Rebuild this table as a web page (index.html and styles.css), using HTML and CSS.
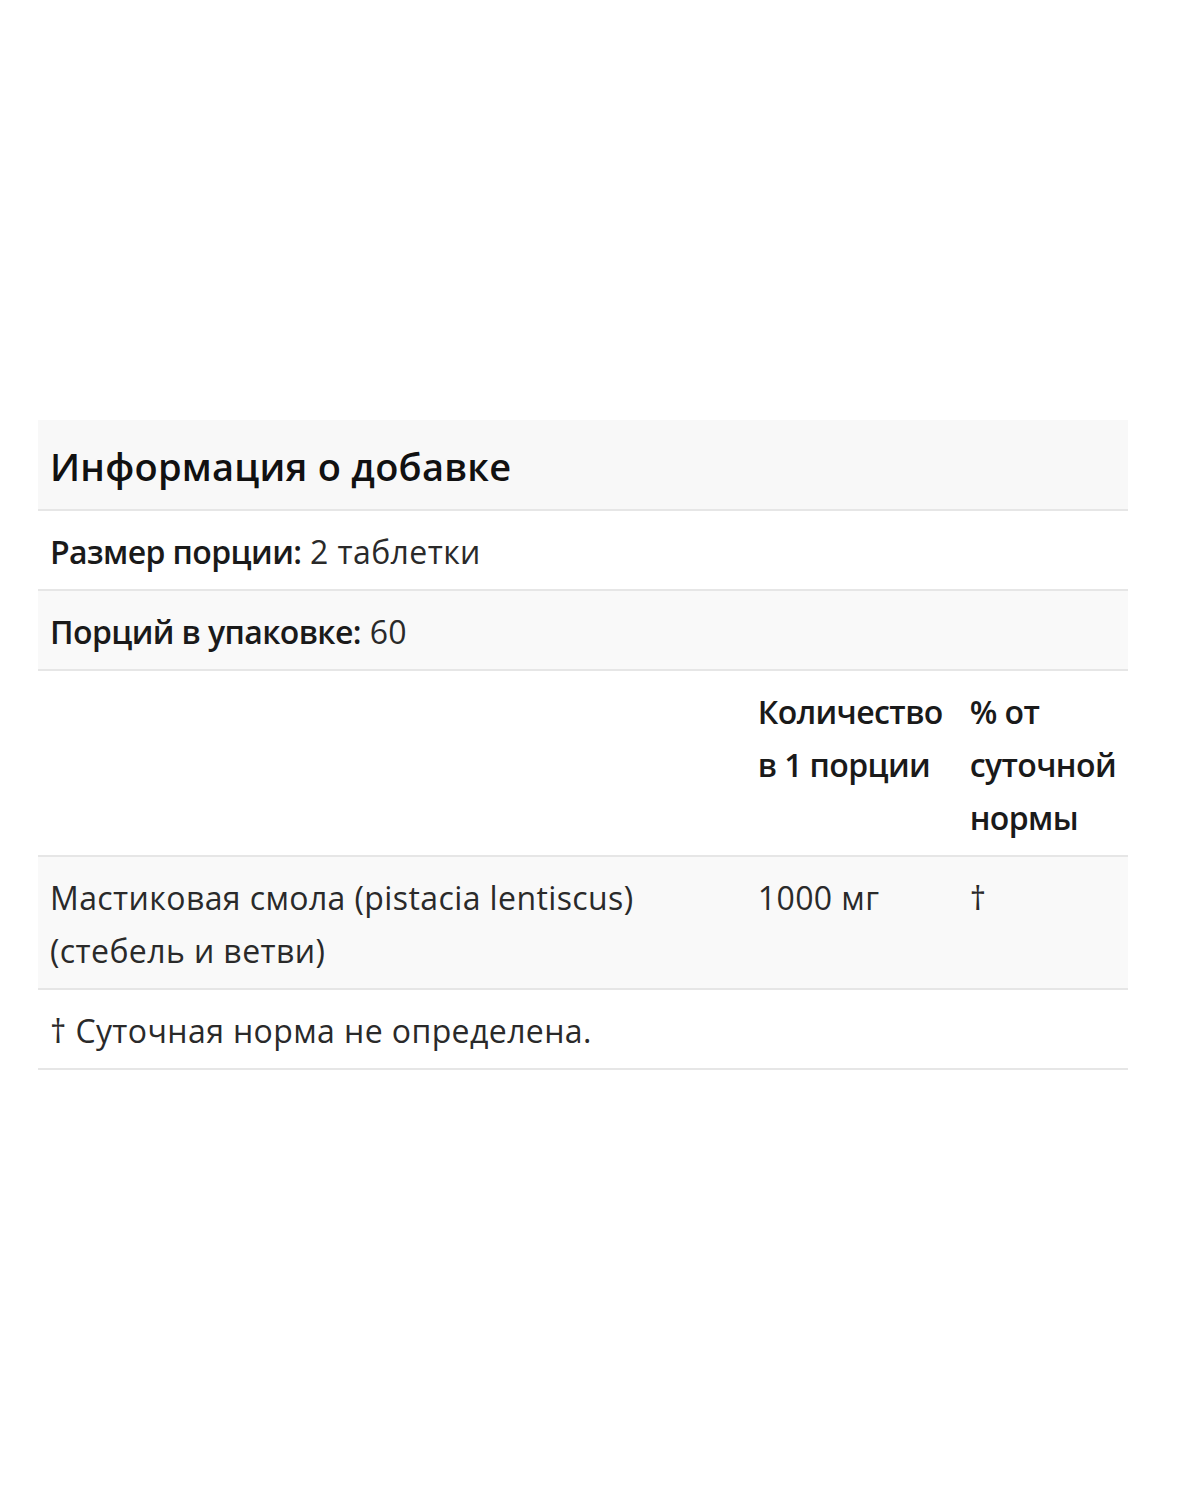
FILE: index.html
```html
<!DOCTYPE html>
<html lang="ru">
<head>
<meta charset="utf-8">
<title>Информация о добавке</title>
<link rel="stylesheet" href="styles.css">
</head>
<body>
<main class="page">
  <table class="facts">
    <thead>
      <tr class="title-row">
        <th colspan="3" class="title">Информация о добавке</th>
      </tr>
    </thead>
    <tbody>
      <tr class="row-white">
        <td colspan="3"><strong>Размер порции:</strong> 2 таблетки</td>
      </tr>
      <tr class="row-gray">
        <td colspan="3"><strong>Порций в упаковке:</strong> 60</td>
      </tr>
      <tr class="row-white head-row">
        <td class="c-name"></td>
        <td class="c-amt"><strong>Количество в&nbsp;1&nbsp;порции</strong></td>
        <td class="c-dv"><strong>% от суточной нормы</strong></td>
      </tr>
      <tr class="row-gray">
        <td class="c-name">Мастиковая смола (pistacia lentiscus) (стебель и ветви)</td>
        <td class="c-amt">1000 мг</td>
        <td class="c-dv">†</td>
      </tr>
      <tr class="row-white">
        <td colspan="3">† Суточная норма не определена.</td>
      </tr>
    </tbody>
  </table>
</main>
</body>
</html>
```

FILE: styles.css
```css
html, body {
  margin: 0;
  padding: 0;
  background: #ffffff;
}

.page {
  padding: 420px 0 0 38px;
  font-family: "Open Sans", "Liberation Sans", Arial, sans-serif;
  color: #2a2a2a;
}

.facts {
  width: 1090px;
  border-collapse: collapse;
  font-size: 32px;
  line-height: 53px;
  letter-spacing: 0.4px;
}

.facts td, .facts th {
  padding: 14px 12px 11px 12px;
  text-align: left;
  vertical-align: top;
  border-bottom: 2px solid #e6e6e6;
}

.facts strong {
  font-weight: 600;
  color: #1a1a1a;
  letter-spacing: -0.6px;
}

.title-row {
  background: #f8f8f8;
}

.title {
  font-size: 38px;
  font-weight: 600;
  line-height: 64px;
  color: #111111;
  letter-spacing: 0.25px;
  padding-top: 13px;
  padding-bottom: 13px;
}

.row-white {
  background: #ffffff;
}

.row-gray {
  background: #f9f9f9;
}

.c-name {
  width: 696px;
}

.c-amt {
  width: 188px;
}

.c-dv {
  width: 146px;
}
```
